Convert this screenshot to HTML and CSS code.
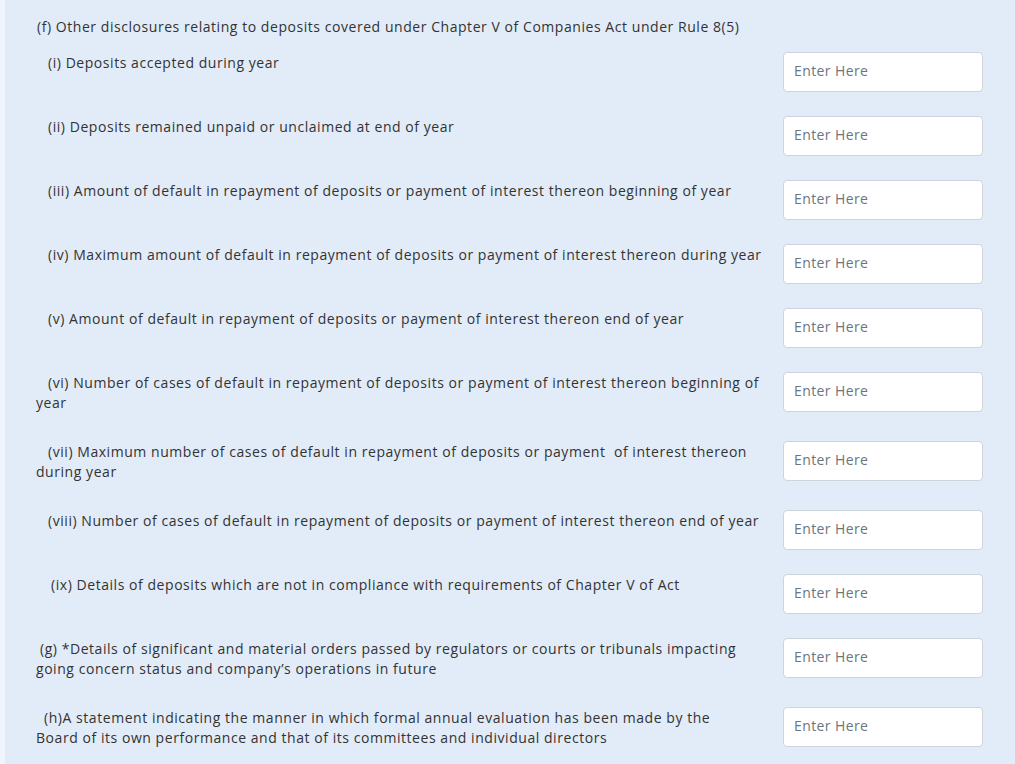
FILE: index.html
```html
<!DOCTYPE html>
<html lang="en">
<head>
<meta charset="utf-8">
<title>Disclosures</title>
<link rel="stylesheet" href="styles.css">
</head>
<body>
<div class="panel">
  <div class="heading">(f) Other disclosures relating to deposits covered under Chapter V of Companies Act under Rule 8(5)</div>

  <div class="row">
    <label class="label ind-12">(i) Deposits accepted during year</label>
    <input class="field" type="text" placeholder="Enter Here">
  </div>
  <div class="row">
    <label class="label ind-12">(ii) Deposits remained unpaid or unclaimed at end of year</label>
    <input class="field" type="text" placeholder="Enter Here">
  </div>
  <div class="row">
    <label class="label ind-12">(iii) Amount of default in repayment of deposits or payment of interest thereon beginning of year</label>
    <input class="field" type="text" placeholder="Enter Here">
  </div>
  <div class="row">
    <label class="label ind-12">(iv) Maximum amount of default in repayment of deposits or payment of interest thereon during year</label>
    <input class="field" type="text" placeholder="Enter Here">
  </div>
  <div class="row">
    <label class="label ind-12">(v) Amount of default in repayment of deposits or payment of interest thereon end of year</label>
    <input class="field" type="text" placeholder="Enter Here">
  </div>
  <div class="row">
    <label class="label ind-12">(vi) Number of cases of default in repayment of deposits or payment of interest thereon beginning of year</label>
    <input class="field" type="text" placeholder="Enter Here">
  </div>
  <div class="row">
    <label class="label ind-12">(vii) Maximum number of cases of default in repayment of deposits or payment&nbsp; of interest thereon during year</label>
    <input class="field" type="text" placeholder="Enter Here">
  </div>
  <div class="row">
    <label class="label ind-12">(viii) Number of cases of default in repayment of deposits or payment of interest thereon end of year</label>
    <input class="field" type="text" placeholder="Enter Here">
  </div>
  <div class="row">
    <label class="label ind-15">(ix) Details of deposits which are not in compliance with requirements of Chapter V of Act</label>
    <input class="field" type="text" placeholder="Enter Here">
  </div>
  <div class="row">
    <label class="label ind-4">(g) *Details of significant and material orders passed by regulators or courts or tribunals impacting going concern status and company’s operations in future</label>
    <input class="field" type="text" placeholder="Enter Here">
  </div>
  <div class="row">
    <label class="label ind-8">(h)A statement indicating the manner in which formal annual evaluation has been made by the<br>Board of its own performance and that of its committees and individual directors</label>
    <input class="field" type="text" placeholder="Enter Here">
  </div>
</div>
</body>
</html>
```

FILE: styles.css
```css
html, body {
  margin: 0;
  padding: 0;
}

body {
  background: #eef5fd;
  font-family: "Open Sans", "Liberation Sans", sans-serif;
  font-size: 14px;
  letter-spacing: 0.55px;
  color: #333333;
}

.panel {
  margin-left: 5px;
  background: #e2ecf8;
  min-height: 764px;
  padding: 17px 32px 20px 31px;
  box-sizing: border-box;
}

.heading {
  line-height: 20px;
  margin-bottom: 15px;
  padding-left: 1px;
}

.row {
  display: grid;
  grid-template-columns: 1fr 200px;
  column-gap: 16px;
  align-items: start;
  margin-bottom: 24px;
}

.label {
  line-height: 20px;
  padding: 1px 0 4px;
}

.ind-4 { text-indent: 4px; }
.ind-8 { text-indent: 8px; }
.ind-12 { text-indent: 12px; }
.ind-15 { text-indent: 15px; }

.field {
  box-sizing: border-box;
  width: 200px;
  height: 40px;
  margin: 0;
  padding: 0 10px 4px;
  border: 1px solid #ced4da;
  border-radius: 4px;
  background: #ffffff;
  font-family: inherit;
  font-size: 14px;
  letter-spacing: 0.4px;
  color: #333333;
  outline: none;
}

.field::placeholder {
  color: #6c757d;
  opacity: 1;
}
```
